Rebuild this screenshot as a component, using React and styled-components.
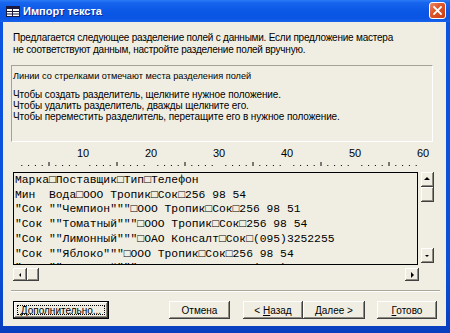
import React from 'react';
import styled, { createGlobalStyle } from 'styled-components';

const Global = createGlobalStyle`
  html, body { margin: 0; padding: 0; background: #fff; }
  body { width: 450px; height: 333px; overflow: hidden; }
  #root { width: 450px; height: 333px; }
`;

const BG = '#F0EEE2';

const Frame = styled.div`
  width: 450px;
  height: 333px;
  box-sizing: border-box;
  display: flex;
  flex-direction: column;
  background: linear-gradient(180deg, #0B55E2 0%, #0A4FD8 80%, #083FBE 100%);
`;

const TitleBar = styled.div`
  height: 22px;
  flex: none;
  display: flex;
  align-items: center;
  padding: 0 4px 0 6px;
  background: linear-gradient(180deg, #2C7BF6 0%, #1765EE 12%, #0B58E6 50%, #0A55E3 85%, #1A64EC 100%);
`;

const TitleText = styled.div`
  margin-left: 3px;
  flex: 1;
  color: #fff;
  font-family: 'Liberation Sans', Arial, sans-serif;
  font-weight: bold;
  font-size: 11px;
  text-shadow: 1px 1px 0 #0A2A9A;
`;

const CloseButton = styled.div`
  width: 17px;
  height: 17px;
  box-sizing: border-box;
  border: 1px solid #fff;
  border-radius: 3px;
  background: linear-gradient(135deg, #EE8A6A 0%, #E0582E 40%, #C93C10 100%);
  display: flex;
  align-items: center;
  justify-content: center;
  margin-top: -1px;
`;

const Client = styled.div`
  flex: 1;
  margin: 0 4px 7px 3px;
  background: ${BG};
  display: flex;
  flex-direction: column;
  font-family: 'Liberation Sans', Arial, sans-serif;
  font-size: 10px;
  color: #000;
  overflow: hidden;
`;

const Intro = styled.div`
  padding: 10px 0 0 10px;
  line-height: 12px;
  letter-spacing: -0.22px;
  white-space: nowrap;
`;

const Panel = styled.div`
  margin: 9px 0 0 8px;
  width: 422px;
  height: 77px;
  box-sizing: border-box;
  border-top: 1px solid #A5A397;
  border-left: 1px solid #A5A397;
  border-right: 1px solid #fff;
  border-bottom: 1px solid #fff;
  padding: 4px 0 0 1px;
`;

const PanelTitle = styled.div`
  line-height: 12px;
  font-size: 9.2px;
  white-space: nowrap;
`;

const Instructions = styled.div`
  margin-top: 7px;
  line-height: 11px;
  letter-spacing: -0.1px;
  white-space: nowrap;
`;

const RulerSvg = styled.svg`
  display: block;
  flex: none;
  width: 443px;
  height: 26px;
`;

const PreviewRow = styled.div`
  margin-top: 4px;
  padding-left: 10px;
  display: flex;
  align-items: flex-start;
`;

const DataBox = styled.div`
  width: 405px;
  height: 93px;
  box-sizing: border-box;
  border: 1px solid #000;
  padding: 0 0 0 1px;
  overflow: hidden;
  font-family: 'Liberation Mono', 'Courier New', monospace;
  font-size: 11.33px;
  line-height: 14.7px;
  color: #000;
`;

const DataLine = styled.div`
  white-space: pre;
`;

const VScroll = styled.div`
  margin-left: 3px;
  width: 13px;
  height: 91px;
  display: flex;
  flex-direction: column;
`;

const HScroll = styled.div`
  margin: 3px 0 0 10px;
  width: 406px;
  height: 13px;
  display: flex;
`;

const Track = styled.div`
  flex: 1;
`;

const ScrollBtn = styled.div`
  flex: none;
  width: ${p => p.$w}px;
  height: ${p => p.$h}px;
  box-sizing: border-box;
  background: ${BG};
  box-shadow: inset -1px -1px 0 #404040, inset 1px 1px 0 #fff, inset -2px -2px 0 #8E8C80;
  display: flex;
  align-items: center;
  justify-content: center;
`;

const Arrow = styled.div`
  width: 0;
  height: 0;
  ${p => p.$dir === 'up' && `
    border-left: 3px solid transparent;
    border-right: 3px solid transparent;
    border-bottom: 3px solid #000;
    margin: -2px 1px 0 0;
  `}
  ${p => p.$dir === 'down' && `
    border-left: 2px solid transparent;
    border-right: 2px solid transparent;
    border-top: 2px solid #000;
    margin: 0 1px 0 0;
  `}
  ${p => p.$dir === 'left' && `
    border-top: 2px solid transparent;
    border-bottom: 2px solid transparent;
    border-right: 2px solid #000;
  `}
  ${p => p.$dir === 'right' && `
    border-top: 3px solid transparent;
    border-bottom: 3px solid transparent;
    border-left: 3px solid #000;
    margin-left: 1px;
  `}
`;

const Separator = styled.div`
  margin: 9px 0 0 8px;
  width: 429px;
  height: 2px;
  box-sizing: border-box;
  border-top: 1px solid #ACA899;
  border-bottom: 1px solid #fff;
`;

const ButtonRow = styled.div`
  margin-top: 9px;
  height: 18px;
  display: flex;
  padding: 0 9px 0 10px;
`;

const Button = styled.div`
  position: relative;
  flex: none;
  width: ${p => p.$w}px;
  height: 18px;
  box-sizing: border-box;
  margin-left: ${p => (p.$auto ? 'auto' : '0')};
  margin-right: ${p => p.$mr || 0}px;
  background: ${BG};
  border: ${p => (p.$default ? '1px solid #000' : 'none')};
  box-shadow: inset -1px -1px 0 #404040, inset 1px 1px 0 #fff, inset -2px -2px 0 #8E8C80;
  display: flex;
  align-items: center;
  justify-content: center;
  font-size: 10px;
  white-space: nowrap;
  ${p => p.$default && `
    &::after {
      content: '';
      position: absolute;
      left: 3px; top: 3px; right: 3px; bottom: 3px;
      border: 1px dotted #000;
    }
  `}
`;

const rows = [
  'Марка□Поставщик□Тип□Телефон',
  'Мин  Вода□ООО Тропик□Сок□256 98 54',
  '"Сок ""Чемпион"""□ООО Тропик□Сок□256 98 51',
  '"Сок ""Томатный"""□ООО Тропик□Сок□256 98 54',
  '"Сок ""Лимонный"""□ОАО Консалт□Сок□(095)3252255',
  '"Сок ""Яблоко"""□ООО Тропик□Сок□256 98 54',
  '"Сок ""Вишневый"""□ОАО Консалт□Сок□(095)3252256',
];

function Ruler() {
  const x0 = 12;
  const cw = 6.8;
  const ticks = [];
  for (let n = 1; n <= 60; n++) {
    const x = x0 + n * cw;
    if (n % 10 === 0) continue;
    if (n % 5 === 0) {
      ticks.push(<rect key={n} x={x - 0.5} y={20} width={1} height={4} fill="#000" />);
    } else {
      ticks.push(<rect key={n} x={x - 0.5} y={23} width={1} height={1} fill="#000" />);
    }
  }
  const labels = [10, 20, 30, 40, 50, 60].map(v => (
    <text
      key={v}
      x={x0 + v * cw}
      y={15}
      textAnchor="middle"
      fontFamily="'Liberation Sans', Arial, sans-serif"
      fontSize="11"
      fill="#000"
    >
      {v}
    </text>
  ));
  return (
    <RulerSvg viewBox="0 0 443 26">
      {labels}
      {ticks}
    </RulerSvg>
  );
}

function TitleIcon() {
  return (
    <svg width="14" height="11" viewBox="0 0 14 11">
      <rect x="0.5" y="0.5" width="13" height="10" fill="#fff" stroke="#1A1A40" />
      <rect x="1" y="1" width="12" height="2" fill="#1A1A40" />
      <line x1="1" y1="5.5" x2="13" y2="5.5" stroke="#1A1A40" />
      <line x1="1" y1="8" x2="13" y2="8" stroke="#1A1A40" />
      <line x1="6.5" y1="3" x2="6.5" y2="10" stroke="#1A1A40" />
    </svg>
  );
}

export default function App() {
  return (
    <>
      <Global />
      <Frame>
        <TitleBar>
          <TitleIcon />
          <TitleText>Импорт текста</TitleText>
          <CloseButton>
            <svg width="9" height="9" viewBox="0 0 9 9">
              <path d="M1 1 L8 8 M8 1 L1 8" stroke="#fff" strokeWidth="1.8" strokeLinecap="square" />
            </svg>
          </CloseButton>
        </TitleBar>
        <Client>
          <Intro>
            Предлагается следующее разделение полей с данными. Если предложение мастера
            <br />
            не соответствуют данным, настройте разделение полей вручную.
          </Intro>
          <Panel>
            <PanelTitle>Линии со стрелками отмечают места разделения полей</PanelTitle>
            <Instructions>
              Чтобы создать разделитель, щелкните нужное положение.
              <br />
              Чтобы удалить разделитель, дважды щелкните его.
              <br />
              Чтобы переместить разделитель, перетащите его в нужное положение.
            </Instructions>
          </Panel>
          <Ruler />
          <PreviewRow>
            <DataBox>
              {rows.map((r, i) => (
                <DataLine key={i}>{r}</DataLine>
              ))}
            </DataBox>
            <VScroll>
              <ScrollBtn $w={13} $h={15}><Arrow $dir="up" /></ScrollBtn>
              <ScrollBtn $w={13} $h={15} />
              <Track />
              <ScrollBtn $w={13} $h={15}><Arrow $dir="down" /></ScrollBtn>
            </VScroll>
          </PreviewRow>
          <HScroll>
            <ScrollBtn $w={14} $h={13}><Arrow $dir="left" /></ScrollBtn>
            <ScrollBtn $w={12} $h={13} />
            <Track />
            <ScrollBtn $w={14} $h={13}><Arrow $dir="right" /></ScrollBtn>
          </HScroll>
          <Separator />
          <ButtonRow>
            <Button $w={96} $default><span><u>Д</u>ополнительно...</span></Button>
            <Button $w={61} $auto $mr={13}>Отмена</Button>
            <Button $w={60}><span>&lt; <u>Н</u>азад</span></Button>
            <Button $w={62} $mr={12}><span><u>Д</u>алее &gt;</span></Button>
            <Button $w={60}><span><u>Г</u>отово</span></Button>
          </ButtonRow>
        </Client>
      </Frame>
    </>
  );
}
